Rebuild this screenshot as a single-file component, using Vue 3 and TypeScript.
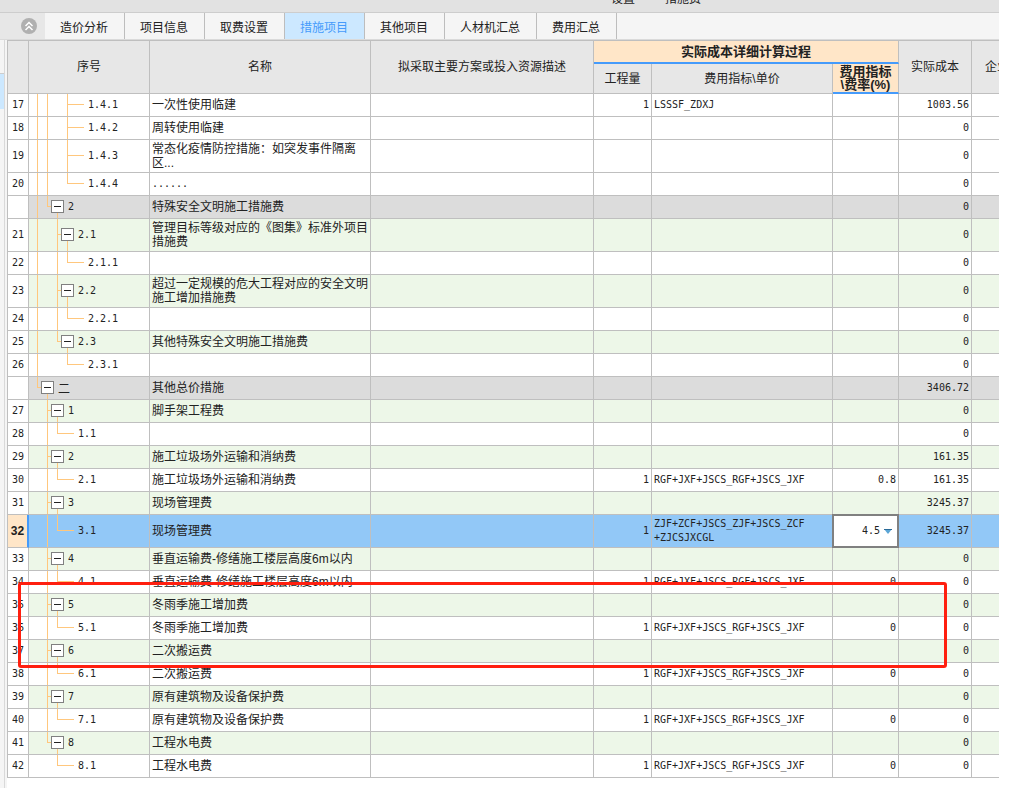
<script setup lang="ts">
import { ref } from 'vue'

type Tone = 'plain' | 'green' | 'group' | 'selected'

interface Row {
  no: string
  // One character per tree level: "|" through, "+" tee, "L" elbow, "." empty
  guides: string
  branch: boolean
  code: string
  name: string
  tone: Tone
  qty?: string
  formula?: string
  rate?: string
  cost: string
  tall?: boolean
}

const tabs = ['造价分析', '项目信息', '取费设置', '措施项目', '其他项目', '人材机汇总', '费用汇总']
const activeTab = ref('措施项目')
const rate = ref('4.5')

const labour = 'RGF+JXF+JSCS_RGF+JSCS_JXF'

function leaf(no: string, guides: string, code: string, name: string, cost: string, extra: Partial<Row> = {}): Row {
  return { no, guides, branch: false, code, name, tone: 'plain', cost, ...extra }
}

function branch(no: string, guides: string, code: string, name: string, cost: string, extra: Partial<Row> = {}): Row {
  return { no, guides, branch: true, code, name, tone: 'green', cost, ...extra }
}

const priced = { qty: '1', formula: labour, rate: '0' }

const rows: Row[] = [
  leaf('17', '||.+', '1.4.1', '一次性使用临建', '1003.56', { qty: '1', formula: 'LSSSF_ZDXJ' }),
  leaf('18', '||.+', '1.4.2', '周转使用临建', '0'),
  leaf('19', '||.+', '1.4.3', '常态化疫情防控措施：如突发事件隔离区...', '0', { tall: true }),
  leaf('20', '||.L', '1.4.4', '......', '0'),
  branch('', '|L', '2', '特殊安全文明施工措施费', '0', { tone: 'group' }),
  branch('21', '|.+', '2.1', '管理目标等级对应的《图集》标准外项目措施费', '0', { tall: true }),
  leaf('22', '|.|L', '2.1.1', '', '0'),
  branch('23', '|.+', '2.2', '超过一定规模的危大工程对应的安全文明施工增加措施费', '0', { tall: true }),
  leaf('24', '|.|L', '2.2.1', '', '0'),
  branch('25', '|.L', '2.3', '其他特殊安全文明施工措施费', '0'),
  leaf('26', '|..L', '2.3.1', '', '0'),
  branch('', 'L', '二', '其他总价措施', '3406.72', { tone: 'group' }),
  branch('27', '.+', '1', '脚手架工程费', '0'),
  leaf('28', '.|L', '1.1', '', '0'),
  branch('29', '.+', '2', '施工垃圾场外运输和消纳费', '161.35'),
  leaf('30', '.|L', '2.1', '施工垃圾场外运输和消纳费', '161.35', { ...priced, rate: '0.8' }),
  branch('31', '.+', '3', '现场管理费', '3245.37'),
  leaf('32', '.|L', '3.1', '现场管理费', '3245.37', {
    tone: 'selected',
    tall: true,
    qty: '1',
    formula: 'ZJF+ZCF+JSCS_ZJF+JSCS_ZCF+ZJCSJXCGL',
  }),
  branch('33', '.+', '4', '垂直运输费-修缮施工楼层高度6m以内', '0'),
  leaf('34', '.|L', '4.1', '垂直运输费-修缮施工楼层高度6m以内', '0', priced),
  branch('35', '.+', '5', '冬雨季施工增加费', '0'),
  leaf('36', '.|L', '5.1', '冬雨季施工增加费', '0', priced),
  branch('37', '.+', '6', '二次搬运费', '0'),
  leaf('38', '.|L', '6.1', '二次搬运费', '0', priced),
  branch('39', '.+', '7', '原有建筑物及设备保护费', '0'),
  leaf('40', '.|L', '7.1', '原有建筑物及设备保护费', '0', priced),
  branch('41', '.L', '8', '工程水电费', '0'),
  leaf('42', '..L', '8.1', '工程水电费', '0', priced),
]

const guideClass: Record<string, string> = { '|': 'through', '+': 'tee', L: 'elbow', '.': 'none' }
</script>

<template>
  <div class="page">
    <header class="toolbar">
      <button type="button">设置</button>
      <button type="button">措施费</button>
    </header>

    <nav class="tabs">
      <div class="collapse-area">
        <button type="button" class="collapse" aria-label="收起">
          <svg width="16" height="16" viewBox="0 0 16 16">
            <circle cx="8" cy="8" r="8" fill="#b0b0b0" />
            <path d="M4.5 8 L8 4.5 L11.5 8 M4.5 12 L8 8.5 L11.5 12" fill="none" stroke="#fff" stroke-width="1.5" />
          </svg>
        </button>
      </div>
      <button
        v-for="tab in tabs"
        :key="tab"
        type="button"
        class="tab"
        :class="{ active: tab === activeTab }"
        @click="activeTab = tab"
      >
        {{ tab }}
      </button>
    </nav>

    <div class="body">
      <aside class="gutter"><div class="gutter-mark"></div></aside>
      <main class="sheet">
        <table>
          <colgroup>
            <col class="c-no" />
            <col class="c-code" />
            <col class="c-name" />
            <col />
            <col class="c-qty" />
            <col class="c-formula" />
            <col class="c-rate" />
            <col class="c-cost" />
            <col class="c-more" />
          </colgroup>
          <thead>
            <tr class="head-top">
              <th rowspan="2"></th>
              <th rowspan="2">序号</th>
              <th rowspan="2">名称</th>
              <th rowspan="2">拟采取主要方案或投入资源描述</th>
              <th colspan="3" class="hot">实际成本详细计算过程</th>
              <th rowspan="2">实际成本</th>
              <th rowspan="2" class="more">企业</th>
            </tr>
            <tr class="head-sub">
              <th>工程量</th>
              <th>费用指标\单价</th>
              <th class="hot">费用指标<br />\费率(%)</th>
            </tr>
          </thead>
          <tbody>
            <tr v-for="(row, i) in rows" :key="i" :class="[row.tone, { tall: row.tall }]">
              <td class="no">{{ row.no }}</td>
              <td class="code">
                <div class="tree">
                  <span v-for="(g, n) in row.guides" :key="n" class="guide" :class="guideClass[g]"></span>
                  <span v-if="row.branch" class="node">
                    <button type="button" class="toggle" :aria-label="'折叠 ' + row.code"></button>
                  </span>
                  <span v-else class="stem"></span>
                  <span class="label" :class="{ han: row.code === '二' }">{{ row.code }}</span>
                </div>
              </td>
              <td class="name" :class="{ dots: row.name === '......' }">{{ row.name }}</td>
              <td></td>
              <td class="num">{{ row.qty }}</td>
              <td class="formula">{{ row.formula }}</td>
              <td class="num rate">
                <div v-if="row.tone === 'selected'" class="editor">
                  <input v-model="rate" type="text" aria-label="费率" />
                  <button type="button" aria-label="选择费率">
                    <svg width="8" height="5" viewBox="0 0 8 5">
                      <path d="M0 0 H8 L4 5 Z" fill="#5ba6d6" />
                      <path d="M0 0 H8 V1 H0 Z" fill="#2a6a98" />
                    </svg>
                  </button>
                </div>
                <template v-else>{{ row.rate }}</template>
              </td>
              <td class="num">{{ row.cost }}</td>
              <td class="last"></td>
            </tr>
          </tbody>
        </table>
      </main>
    </div>
    <div class="marker"></div>
  </div>
</template>

<style>
body {
  margin: 0;
  background: #fff;
}
</style>

<style scoped>
* {
  box-sizing: border-box;
}

.page {
  position: relative;
  display: flex;
  flex-direction: column;
  min-height: 100vh;
  padding-right: 12px;
  overflow: hidden;
  font-family: 'Liberation Sans', 'Noto Sans CJK SC', sans-serif;
  font-size: 12px;
  color: #222;
}

button {
  margin: 0;
  padding: 0;
  border: 0;
  background: none;
  color: inherit;
  font: inherit;
}

.toolbar {
  display: flex;
  align-items: flex-start;
  gap: 30px;
  height: 13px;
  padding-left: 611px;
  overflow: hidden;
  background: #e2e2e2;
  border-bottom: 1px solid #cdcdcd;
}

.toolbar button {
  height: 14px;
  margin-top: -8px;
  line-height: 14px;
}

.tabs {
  display: flex;
  height: 27px;
  background: #f5f5f5;
  border-bottom: 1px solid #dadada;
}

.collapse-area {
  display: flex;
  align-items: center;
  justify-content: flex-end;
  width: 45px;
  padding-right: 8px;
  background: #e7e7e7;
}

.collapse {
  display: flex;
}

.tab {
  padding: 0 16px 0 15px;
  border-right: 1px solid #bdbdbd;
}

.tab.active {
  background: #cce8ff;
  color: #459bfb;
}

.body {
  display: flex;
  flex: 1;
}

.gutter {
  flex: none;
  width: 7px;
  padding-top: 33px;
  background: linear-gradient(to right, #f5f5f5 4px, #d9d9d9 4px, #d9d9d9 5px, #f5f5f5 5px);
}

.gutter-mark {
  width: 4px;
  height: 36px;
  background: #cce8ff;
  border-top: 1px solid #cdcdcd;
}

.sheet {
  flex: 1;
  min-width: 0;
}

table {
  width: 100%;
  table-layout: fixed;
  border-collapse: separate;
  border-spacing: 0;
  border-top: 1px solid #bfbfbf;
  border-left: 1px solid #bfbfbf;
}

.c-no {
  width: 21px;
}
.c-code {
  width: 121px;
}
.c-name {
  width: 221px;
}
.c-qty {
  width: 58px;
}
.c-formula {
  width: 181px;
}
.c-rate {
  width: 66px;
}
.c-cost {
  width: 73px;
}
.c-more {
  width: 27px;
}

th,
td {
  padding: 0;
  border-right: 1px solid #bfbfbf;
  border-bottom: 1px solid #bfbfbf;
  line-height: 14px;
}

th {
  background: #e7e7e7;
  font-weight: 400;
}

.head-top {
  height: 23px;
}

.head-sub {
  height: 30px;
}

th.hot {
  background: #ffe6c8;
  border-bottom: 2px solid #459bfb;
  font-size: 13px;
  font-weight: 700;
}

.head-sub .hot {
  line-height: 13px;
}

th.more {
  padding-left: 13px;
  overflow: hidden;
  border-right: 0;
  text-align: left;
  white-space: nowrap;
}

td {
  height: 23px;
}

.tall td {
  height: 33px;
}

.green td {
  background: #edf7e8;
}

.group td {
  background: #dcdcdc;
}

.selected td {
  background: #92c8f7;
}

td.no {
  background: #fff;
  font-family: 'DejaVu Sans Mono', monospace;
  font-size: 10px;
  text-align: center;
}

.selected td.no {
  background: #ffe6c8;
  border-right: 2px solid #459bfb;
  font-family: 'Liberation Sans', sans-serif;
  font-size: 12px;
  font-weight: 700;
}

td.last {
  border-right: 0;
}

.name {
  padding-left: 2px;
}

.name.dots {
  font-family: 'DejaVu Sans Mono', monospace;
  font-size: 10px;
}

.num {
  padding-right: 2px;
  font-family: 'DejaVu Sans Mono', monospace;
  font-size: 10px;
  text-align: right;
}

.formula {
  padding-left: 2px;
  padding-right: 24px;
  font-family: 'DejaVu Sans Mono', monospace;
  font-size: 10px;
  overflow-wrap: anywhere;
}

.tree {
  display: flex;
  align-items: stretch;
  height: 100%;
  padding-left: 3px;
}

.guide,
.node {
  position: relative;
  flex: none;
  width: 10px;
}

.through::before,
.tee::before,
.elbow::before {
  content: '';
  position: absolute;
  top: 0;
  bottom: 0;
  left: 5px;
  width: 1px;
  background: #ffc77d;
}

.elbow::before {
  bottom: 50%;
}

.tee::after,
.elbow::after {
  content: '';
  position: absolute;
  top: calc(50% - 1px);
  right: 0;
  left: 5px;
  height: 1px;
  background: #ffc77d;
}

.node {
  display: flex;
  align-items: center;
  padding-bottom: 1px;
}

.node::before {
  content: '';
  position: absolute;
  top: 50%;
  bottom: 0;
  left: 5px;
  width: 1px;
  background: #ffc77d;
}

.toggle {
  position: relative;
  flex: none;
  width: 13px;
  height: 13px;
  margin-left: -1px;
  border: 1px solid #808080;
  background: linear-gradient(#222, #222) center / 7px 1px no-repeat #fff;
}

.stem {
  align-self: center;
  width: 12px;
  height: 2px;
  margin-right: -2px;
  border-top: 1px solid #ffc77d;
}

.label {
  align-self: center;
  padding-left: 6px;
  font-family: 'DejaVu Sans Mono', monospace;
  font-size: 10px;
}

.label.han {
  font-family: 'Noto Sans CJK SC', sans-serif;
  font-size: 12px;
}

.rate {
  position: relative;
}

.editor {
  position: absolute;
  inset: -1px;
  display: flex;
  align-items: center;
  background: #fff;
  border: 2px solid #808080;
}

.editor input {
  flex: 1;
  min-width: 0;
  padding: 0 4px 0 0;
  border: 0;
  outline: 0;
  background: none;
  color: inherit;
  font: inherit;
  text-align: right;
}

.editor button {
  display: flex;
  margin-right: 5px;
}

.marker {
  position: absolute;
  top: 582px;
  right: 64px;
  left: 18px;
  height: 86px;
  border: 3px solid #ff1f0f;
  border-radius: 3px;
  pointer-events: none;
}
</style>
